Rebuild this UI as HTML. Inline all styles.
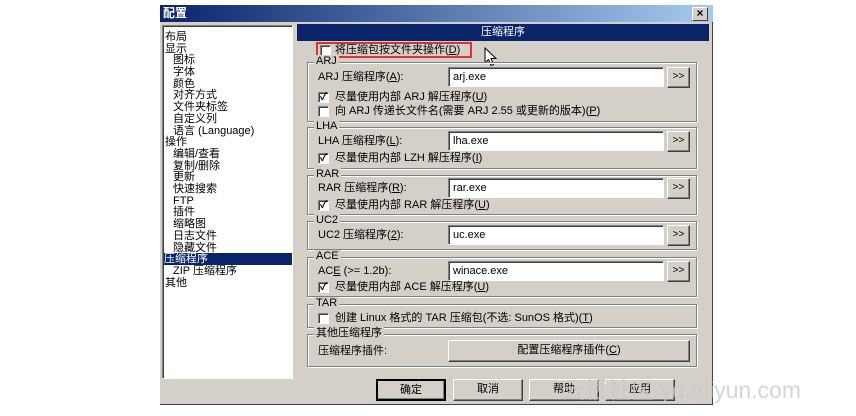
<!DOCTYPE html>
<html><head><meta charset="utf-8"><style>
*{margin:0;padding:0;box-sizing:border-box}
body{width:856px;height:416px;background:#fff;position:relative;overflow:hidden;font-family:"Liberation Sans","Noto Sans CJK SC",sans-serif;font-size:11px;color:#000}
.a{position:absolute}
.win{left:160px;top:5px;width:553px;height:400px;background:#d4d0c8;border-right:1px solid #404040;border-bottom:1px solid #404040}
.title{left:160px;top:5px;width:553px;height:17px;background:linear-gradient(90deg,#0a246a,#a6caf0);color:#fff;font-weight:bold;font-size:12px;padding:1px 3px;line-height:15px}
.x{left:692px;top:7px;width:16px;height:14px;background:#d4d0c8;border:1px solid;border-color:#fff #404040 #404040 #fff;font-size:12px;line-height:11px;text-align:center;font-weight:bold}
.list{left:162px;top:25px;width:131px;height:354px;background:#fff;border:1px solid;border-color:#808080 #fff #fff #808080;box-shadow:inset 1px 1px 0 #404040}
.li{position:absolute;left:2px;height:12px;line-height:12px;font-size:11px;white-space:nowrap}
.sel{background:#0a246a;color:#fff;left:1px;width:128px}
.hdr{left:297px;top:24px;width:412px;height:17px;background:#0a246a;color:#fff;text-align:center;line-height:17px;font-size:11px}
.grp{position:absolute;left:307px;width:390px;border:1px solid #808080;box-shadow:1px 1px 0 #fff,inset 1px 1px 0 #fff}
.gl{position:absolute;left:6px;top:-8px;background:#d4d0c8;padding:0 2px;line-height:13px}
.inp{position:absolute;left:448px;width:216px;height:20px;background:#fff;border:1px solid;border-color:#808080 #fff #fff #808080;box-shadow:inset 1px 1px 0 #404040;padding:3px 4px;line-height:13px}
.bb{position:absolute;left:667px;width:23px;height:21px;border:1px solid;border-color:#fff #404040 #404040 #fff;box-shadow:inset -1px -1px 0 #808080;text-align:center;line-height:18px;font-size:10px}
.cb{position:absolute;width:11px;height:11px;background:#fff;border:1px solid;border-color:#808080 #fff #fff #808080;box-shadow:inset 1px 1px 0 #404040;font-size:10px;line-height:9px;text-align:center;font-weight:bold}
.t{position:absolute;white-space:nowrap;line-height:13px}
.btn{position:absolute;top:379px;width:70px;height:22px;border:1px solid;border-color:#fff #404040 #404040 #fff;box-shadow:inset -1px -1px 0 #808080;text-align:center;line-height:19px}
</style></head><body>
<div class="a win"></div>
<div class="a title">配置</div>
<div class="a x">×</div>
<div class="a list">
<div class="li" style="top:5px">布局</div>
<div class="li" style="top:17px">显示</div>
<div class="li" style="top:28px;left:10px">图标</div>
<div class="li" style="top:40px;left:10px">字体</div>
<div class="li" style="top:52px;left:10px">颜色</div>
<div class="li" style="top:63px;left:10px">对齐方式</div>
<div class="li" style="top:75px;left:10px">文件夹标签</div>
<div class="li" style="top:87px;left:10px">自定义列</div>
<div class="li" style="top:99px;left:10px">语言 (Language)</div>
<div class="li" style="top:110px">操作</div>
<div class="li" style="top:122px;left:10px">编辑/查看</div>
<div class="li" style="top:134px;left:10px">复制/删除</div>
<div class="li" style="top:145px;left:10px">更新</div>
<div class="li" style="top:157px;left:10px">快速搜索</div>
<div class="li" style="top:169px;left:10px">FTP</div>
<div class="li" style="top:180px;left:10px">插件</div>
<div class="li" style="top:192px;left:10px">缩略图</div>
<div class="li" style="top:204px;left:10px">日志文件</div>
<div class="li" style="top:216px;left:10px">隐藏文件</div>
<div class="li sel" style="top:227px">压缩程序</div>
<div class="li" style="top:239px;left:10px">ZIP 压缩程序</div>
<div class="li" style="top:251px">其他</div>
</div>
<div class="a hdr">压缩程序</div>
<div class="a" style="left:316px;top:42px;width:156px;height:16px;border:2px solid #e03030"></div>
<div class="cb" style="left:320px;top:45px"></div>
<div class="t" style="left:335px;top:44px">将压缩包按文件夹操作(<u>D</u>)</div>
<svg class="a" style="left:484px;top:47px" width="14" height="20" viewBox="0 0 14 20"><path d="M1 1 L1 16 L4.5 12.5 L7 18.5 L9.5 17.5 L7 11.5 L12 11.5 Z" fill="#fff" stroke="#000" stroke-width="1"/></svg>

<div class="grp" style="top:62px;height:60px"><span class="gl">ARJ</span></div>
<div class="t" style="left:318px;top:71px">ARJ 压缩程序(<u>A</u>):</div>
<div class="inp" style="top:67px">arj.exe</div><div class="bb" style="top:67px">&gt;&gt;</div>
<div class="cb" style="left:318px;top:92px">✓</div><div class="t" style="left:335px;top:91px">尽量使用内部 ARJ 解压程序(<u>U</u>)</div>
<div class="cb" style="left:318px;top:106px"></div><div class="t" style="left:335px;top:105px">向 ARJ 传递长文件名(需要 ARJ 2.55 或更新的版本)(<u>P</u>)</div>

<div class="grp" style="top:127px;height:42px"><span class="gl">LHA</span></div>
<div class="t" style="left:318px;top:135px">LHA 压缩程序(<u>L</u>):</div>
<div class="inp" style="top:131px">lha.exe</div><div class="bb" style="top:131px">&gt;&gt;</div>
<div class="cb" style="left:318px;top:153px">✓</div><div class="t" style="left:335px;top:152px">尽量使用内部 LZH 解压程序(<u>I</u>)</div>

<div class="grp" style="top:175px;height:40px"><span class="gl">RAR</span></div>
<div class="t" style="left:318px;top:182px">RAR 压缩程序(<u>R</u>):</div>
<div class="inp" style="top:178px">rar.exe</div><div class="bb" style="top:178px">&gt;&gt;</div>
<div class="cb" style="left:318px;top:200px">✓</div><div class="t" style="left:335px;top:199px">尽量使用内部 RAR 解压程序(<u>U</u>)</div>

<div class="grp" style="top:221px;height:29px"><span class="gl">UC2</span></div>
<div class="t" style="left:318px;top:229px">UC2 压缩程序(<u>2</u>):</div>
<div class="inp" style="top:225px">uc.exe</div><div class="bb" style="top:225px">&gt;&gt;</div>

<div class="grp" style="top:257px;height:40px"><span class="gl">ACE</span></div>
<div class="t" style="left:318px;top:265px">AC<u>E</u> (&gt;= 1.2b):</div>
<div class="inp" style="top:261px">winace.exe</div><div class="bb" style="top:261px">&gt;&gt;</div>
<div class="cb" style="left:318px;top:282px">✓</div><div class="t" style="left:335px;top:281px">尽量使用内部 ACE 解压程序(<u>U</u>)</div>

<div class="grp" style="top:304px;height:24px"><span class="gl">TAR</span></div>
<div class="cb" style="left:318px;top:313px"></div><div class="t" style="left:335px;top:312px">创建 Linux 格式的 TAR 压缩包(不选: SunOS 格式)(<u>T</u>)</div>

<div class="grp" style="top:334px;height:33px"><span class="gl">其他压缩程序</span></div>
<div class="t" style="left:318px;top:345px">压缩程序插件:</div>
<div class="a" style="left:448px;top:340px;width:242px;height:22px;border:1px solid;border-color:#fff #404040 #404040 #fff;box-shadow:inset -1px -1px 0 #808080;text-align:center;line-height:19px">配置压缩程序插件(<u>C</u>)</div>

<div class="btn" style="left:376px;border:2px solid #000">确定</div>
<div class="btn" style="left:453px">取消</div>
<div class="btn" style="left:529px">帮助</div>
<div class="btn" style="left:605px">应用</div>
<div class="a" style="left:562px;top:376px;font-size:23px;color:rgba(200,200,200,0.75);white-space:nowrap;line-height:28px">云栖社区 yq.aliyun.com</div>
</body></html>
